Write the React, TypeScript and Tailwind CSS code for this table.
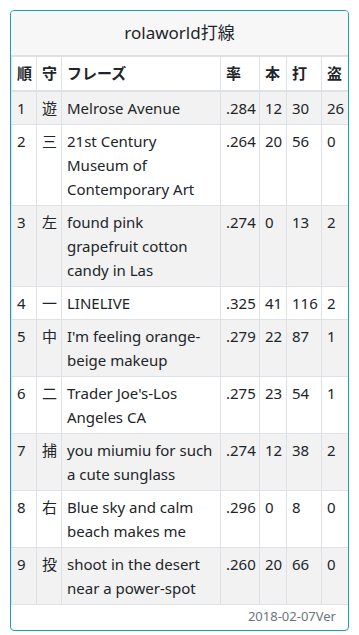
const rows = [
  { no: "1", pos: "遊", phrase: ["Melrose Avenue"], avg: ".284", hr: "12", rbi: "30", sb: "26" },
  { no: "2", pos: "三", phrase: ["21st Century", "Museum of", "Contemporary Art"], avg: ".264", hr: "20", rbi: "56", sb: "0" },
  { no: "3", pos: "左", phrase: ["found pink", "grapefruit cotton", "candy in Las"], avg: ".274", hr: "0", rbi: "13", sb: "2" },
  { no: "4", pos: "一", phrase: ["LINELIVE"], avg: ".325", hr: "41", rbi: "116", sb: "2" },
  { no: "5", pos: "中", phrase: ["I'm feeling orange-", "beige makeup"], avg: ".279", hr: "22", rbi: "87", sb: "1" },
  { no: "6", pos: "二", phrase: ["Trader Joe's-Los", "Angeles CA"], avg: ".275", hr: "23", rbi: "54", sb: "1" },
  { no: "7", pos: "捕", phrase: ["you miumiu for such", "a cute sunglass"], avg: ".274", hr: "12", rbi: "38", sb: "2" },
  { no: "8", pos: "右", phrase: ["Blue sky and calm", "beach makes me"], avg: ".296", hr: "0", rbi: "8", sb: "0" },
  { no: "9", pos: "投", phrase: ["shoot in the desert", "near a power-spot"], avg: ".260", hr: "20", rbi: "66", sb: "0" },
];

const font = { fontFamily: '"Noto Sans", "Noto Sans CJK JP", sans-serif' };

export default function App() {
  const cell = "border border-[#dee2e6] px-[5px] py-[4px] align-top text-left";
  return (
    <div className="bg-white w-[359px] h-[635px] pt-[10px] px-[10px]" style={font}>
      <div className="border border-[#17a2b8] rounded-[4px] overflow-hidden text-[#212529]">
        {/* Header */}
        <div className="bg-[#f7f7f7] border-b border-[#dfdfdf] h-[45px] flex items-center justify-center text-[17px]">
          rolaworld打線
        </div>

        {/* Table */}
        <table className="w-full table-fixed border-collapse text-[15px] leading-[24px]">
          <colgroup>
            <col className="w-[25px]" />
            <col className="w-[25px]" />
            <col className="w-[159px]" />
            <col className="w-[39px]" />
            <col className="w-[27px]" />
            <col className="w-[35px]" />
            <col className="w-[27px]" />
          </colgroup>
          <thead>
            <tr className="font-bold">
              {["順", "守", "フレーズ", "率", "本", "打", "盗"].map((h) => (
                <th key={h} className={`${cell} border-b-2 h-[34px]`}>
                  {h}
                </th>
              ))}
            </tr>
          </thead>
          <tbody>
            {rows.map((r, idx) => (
              <tr key={r.no} className={idx % 2 === 0 ? "bg-[#f2f2f2]" : "bg-white"}>
                <td className={cell}>{r.no}</td>
                <td className={`${cell} px-[3px]`}>{r.pos}</td>
                <td className={cell}>
                  {r.phrase.map((line, i) => (
                    <div key={i} className="whitespace-nowrap">
                      {line}
                    </div>
                  ))}
                </td>
                <td className={cell}>{r.avg}</td>
                <td className={cell}>{r.hr}</td>
                <td className={cell}>{r.rbi}</td>
                <td className={cell}>{r.sb}</td>
              </tr>
            ))}
          </tbody>
        </table>

        {/* Footer */}
        <div className="h-[25px] flex items-center justify-end pr-[12px] text-[13px] text-[#6c757d]">
          2018-02-07Ver
        </div>
      </div>
    </div>
  );
}
